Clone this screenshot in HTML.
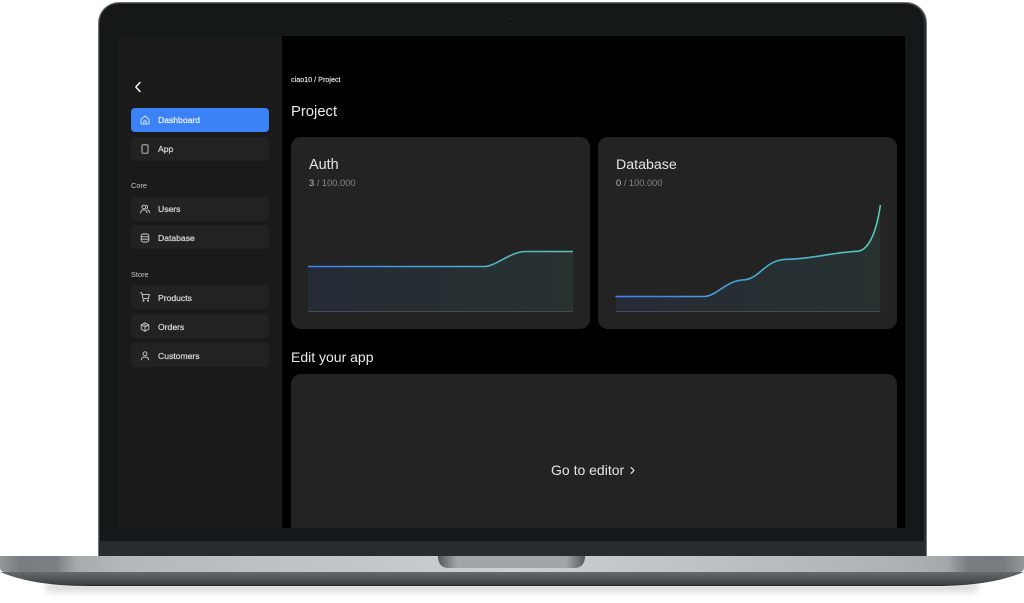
<!DOCTYPE html>
<html>
<head>
<meta charset="utf-8">
<style>
html,body{margin:0;padding:0;background:#fff;}
#s{position:relative;width:1024px;height:603px;overflow:hidden;background:#fff;font-family:"Liberation Sans",sans-serif;}
#s div{position:absolute;box-sizing:border-box;}
.t{white-space:nowrap;line-height:1;}
.n{left:131px;width:138px;height:24px;border-radius:4px;background:#222222;}
.l{left:158px;font-size:8.6px;color:#d4d4d4;white-space:nowrap;line-height:1;-webkit-text-stroke:.25px currentColor;}
.i{position:absolute;left:140px;width:10px;height:10px;}
.i *{fill:none;stroke:#cfcfcf;stroke-width:.9;stroke-linecap:round;stroke-linejoin:round;}
.c{background:#232323;border-radius:10px;}
</style>
</head>
<body>
<div id="s">
<!-- shadow -->
<div style="left:45px;top:584px;width:934px;height:12px;background:linear-gradient(#bdbdbd,#fff);border-radius:0 0 60px 60px;filter:blur(3px);opacity:.8;"></div>
<!-- lid -->
<div style="left:97.5px;top:1.5px;width:829px;height:555px;border-radius:21px 21px 0 0;background:#6d7275;"></div>
<div style="left:98.5px;top:2.5px;width:827px;height:553.5px;border-radius:20px 20px 0 0;background:#2c3234;"></div>
<div style="left:100px;top:4px;width:824px;height:552px;border-radius:18px 18px 0 0;background:#141818;"></div>
<div style="left:99px;top:541px;width:826px;height:15px;background:#272c2e;"></div>
<div style="left:509px;top:19px;width:5px;height:5px;border-radius:50%;background:#0a0c0d;border:1px solid #1e2426;"></div>
<!-- screen -->
<div style="left:118px;top:36px;width:787px;height:492px;background:#000;overflow:hidden;"></div>
<div style="left:118px;top:36px;width:164px;height:492px;background:#1a1a1a;"></div>

<!-- back -->
<svg style="position:absolute;left:133px;top:81px" width="10" height="12" viewBox="0 0 10 12"><path d="M7 1.5 L2.8 6 L7 10.5" fill="none" stroke="#fff" stroke-width="1.4" stroke-linecap="round" stroke-linejoin="round"/></svg>

<!-- nav -->
<div class="n" style="top:108px;background:#3b82f6;"></div>
<svg class="i" style="top:115px" viewBox="0 0 10 10"><path style="stroke:#dbe8fd" d="M1 4.2 L5 1 L9 4.2 V9 H1 Z M3.8 9 V6 H6.2 V9"/></svg>
<div class="l" style="top:116px;color:#e8f0fe;">Dashboard</div>

<div class="n" style="top:137px;"></div>
<svg class="i" style="top:144px" viewBox="0 0 10 10"><rect x="2" y="0.8" width="6" height="8.4" rx="1"/></svg>
<div class="l" style="top:145px;">App</div>

<div class="t" style="left:131px;top:182px;font-size:7.4px;color:#c4c4c4;">Core</div>

<div class="n" style="top:197px;"></div>
<svg class="i" style="top:204px" viewBox="0 0 10 10"><circle cx="3.8" cy="3" r="1.9"/><path d="M0.6 8.8 C0.8 6.6 2 5.8 3.8 5.8 C5.6 5.8 6.8 6.6 7 8.8 M6.4 1.2 C7.8 1.4 8 4.4 6.4 4.8 M7.8 5.9 C9 6.3 9.4 7.3 9.5 8.8"/></svg>
<div class="l" style="top:205px;">Users</div>

<div class="n" style="top:225px;"></div>
<svg class="i" style="top:233px" viewBox="0 0 10 10"><rect x="1.2" y="1" width="7.6" height="8" rx="2"/><path d="M1.2 3.8 H8.8 M1.2 6.2 H8.8"/></svg>
<div class="l" style="top:234px;">Database</div>

<div class="t" style="left:131px;top:271px;font-size:7.4px;color:#c4c4c4;">Store</div>

<div class="n" style="top:285px;"></div>
<svg class="i" style="top:292px" viewBox="0 0 10 10"><path d="M0.4 0.8 H1.8 L3 6.6 H8.4 L9.4 2.4 H2.2"/><circle cx="3.5" cy="8.6" r=".6"/><circle cx="8" cy="8.6" r=".6"/></svg>
<div class="l" style="top:294px;">Products</div>

<div class="n" style="top:314px;"></div>
<svg class="i" style="top:322px" viewBox="0 0 10 10"><path d="M5 .8 L8.8 2.9 V7.1 L5 9.2 L1.2 7.1 V2.9 Z M1.2 2.9 L5 5 L8.8 2.9 M5 5 V9.2 M3 1.9 L6.9 4"/></svg>
<div class="l" style="top:323px;">Orders</div>

<div class="n" style="top:343px;"></div>
<svg class="i" style="top:351px" viewBox="0 0 10 10"><circle cx="5" cy="2.8" r="2"/><path d="M1.4 8.8 C1.4 6.9 3 6 5 6 C7 6 8.6 6.9 8.6 8.8"/></svg>
<div class="l" style="top:352px;">Customers</div>

<!-- main -->
<div class="t" style="left:291px;top:76px;font-size:7.2px;color:#e4e4e4;-webkit-text-stroke:.15px currentColor;">ciao10 / Project</div>
<div class="t" style="left:291px;top:105px;font-size:14.8px;color:#ececec;">Project</div>

<div class="c" style="left:291px;top:137px;width:299px;height:192px;"></div>
<div class="t" style="left:309px;top:158px;font-size:14.4px;color:#e6e6e6;">Auth</div>
<div class="t" style="left:309px;top:179px;font-size:9.3px;color:#858585;"><span style="color:#c0c0c0">3</span> / 100.000</div>

<div class="c" style="left:598px;top:137px;width:299px;height:192px;"></div>
<div class="t" style="left:616px;top:158px;font-size:14.2px;color:#e6e6e6;">Database</div>
<div class="t" style="left:616px;top:179px;font-size:9.3px;color:#858585;"><span style="color:#c0c0c0">0</span> / 100.000</div>

<svg style="position:absolute;left:0;top:0" width="1024" height="603" viewBox="0 0 1024 603">
<defs>
<linearGradient id="g1" gradientUnits="userSpaceOnUse" x1="308" y1="0" x2="573" y2="0"><stop offset="0" stop-color="#3b82f6"/><stop offset="1" stop-color="#58c8b4"/></linearGradient>
<linearGradient id="g2" gradientUnits="userSpaceOnUse" x1="616" y1="0" x2="880" y2="0"><stop offset="0" stop-color="#3b82f6"/><stop offset="1" stop-color="#58c8b4"/></linearGradient>
</defs>
<path d="M308 266.5 H484 C496 266.5 510 251.5 526 251.5 H573 V311.5 H308 Z" fill="url(#g1)" opacity=".09"/>
<path d="M308 266.5 H484 C496 266.5 510 251.5 526 251.5 H573" fill="none" stroke="url(#g1)" stroke-width="1.6"/>
<path d="M308 311.5 H573" stroke="#4a4a4a" stroke-width="1"/>
<path d="M616 296.5 H704 C716 296.5 726 281 742 280 C760 280 764 259.5 787 259.3 C810 259.3 835 252 857 251.3 C868 251 876 234 880.3 205.7 V311.5 H616 Z" fill="url(#g2)" opacity=".09"/>
<path d="M616 296.5 H704 C716 296.5 726 281 742 280 C760 280 764 259.5 787 259.3 C810 259.3 835 252 857 251.3 C868 251 876 234 880.3 205.7" fill="none" stroke="url(#g2)" stroke-width="1.6" stroke-linecap="round"/>
<path d="M616 311.5 H880" stroke="#4a4a4a" stroke-width="1"/>
</svg>

<div class="t" style="left:291px;top:350px;font-size:14px;color:#ececec;">Edit your app</div>

<div style="left:291px;top:374px;width:606px;height:154px;background:#232323;border-radius:10px 10px 0 0;"></div>
<div class="t" style="left:551px;top:463px;font-size:14px;color:#e4e4e4;">Go to editor</div>
<svg style="position:absolute;left:629px;top:465px" width="8" height="11" viewBox="0 0 8 11"><path d="M2.2 2.6 L5 5.5 L2.2 8.4" fill="none" stroke="#e4e4e4" stroke-width="1.2" stroke-linecap="round" stroke-linejoin="round"/></svg>

<!-- base -->
<svg style="position:absolute;left:0;top:556px" width="1024" height="32" viewBox="0 0 1024 32">
<defs>
<linearGradient id="top" x1="0" y1="0" x2="1" y2="0">
<stop offset="0" stop-color="#94989b"/><stop offset=".02" stop-color="#777c80"/><stop offset=".055" stop-color="#7b8084"/><stop offset=".075" stop-color="#a6aaad"/><stop offset=".12" stop-color="#b4b8bb"/><stop offset=".5" stop-color="#cdd0d3"/><stop offset=".88" stop-color="#aeb2b5"/><stop offset=".925" stop-color="#a4a8ab"/><stop offset=".945" stop-color="#787d81"/><stop offset=".98" stop-color="#777c80"/><stop offset="1" stop-color="#94989b"/>
</linearGradient>
<linearGradient id="bot" x1="0" y1="0" x2="0" y2="1">
<stop offset="0" stop-color="#65696c"/><stop offset=".5" stop-color="#505457"/><stop offset=".9" stop-color="#3a3d40"/><stop offset="1" stop-color="#1f2123"/>
</linearGradient>
<linearGradient id="nt" x1="0" y1="0" x2="1" y2="0">
<stop offset="0" stop-color="#55585b"/><stop offset=".13" stop-color="#a2a6a9"/><stop offset=".87" stop-color="#a2a6a9"/><stop offset="1" stop-color="#55585b"/>
</linearGradient>
</defs>
<path d="M0 16 C20 24 45 30 90 30 H934 C979 30 1004 24 1024 16 Z" fill="url(#bot)"/>
<path d="M0 0 H1024 V12 Q1024 15 1020 16 H4 Q0 15 0 12 Z" fill="url(#top)"/>
<path d="M438 0 H585 C585 8 581 12 574 12 H449 C442 12 438 8 438 0 Z" fill="url(#nt)"/>
</svg>
</div>
</body>
</html>
